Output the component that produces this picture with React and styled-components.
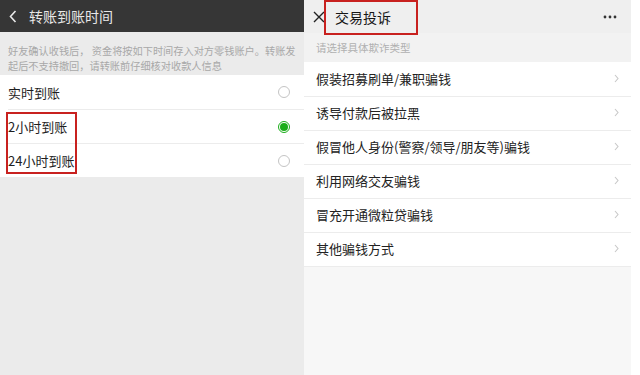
import React from "react";
import styled, { createGlobalStyle } from "styled-components";

const Global = createGlobalStyle`
  html, body { margin: 0; padding: 0; background: #fff; }
  body { font-family: "Noto Sans CJK SC", "Noto Sans", sans-serif; }
  * { box-sizing: border-box; }
`;

const Page = styled.div`
  width: 640px;
  height: 375px;
  display: flex;
  overflow: hidden;
  background: #fff;
`;

const LeftPane = styled.div`
  position: relative;
  width: 304px;
  height: 100%;
  background: #ebebeb;
  display: flex;
  flex-direction: column;
`;

const DarkBar = styled.div`
  height: 32px;
  background: #363636;
  display: flex;
  align-items: center;
  padding-left: 9px;
  gap: 12px;
  color: #e8e8e8;
  font-size: 14px;
`;

const Note = styled.div`
  height: 43px;
  padding: 11px 4px 0 8px;
  font-size: 10.2px;
  line-height: 15px;
  color: #a8a8a8;
`;

const RadioList = styled.div`
  background: #fff;
  padding-left: 8px;
`;

const RadioRow = styled.div`
  height: 34px;
  display: flex;
  align-items: center;
  justify-content: space-between;
  padding-right: 14px;
  font-size: 13px;
  color: #1e1e1e;
  border-top: ${(p) => (p.$first ? "none" : "1px solid #ececec")};
`;

const Radio = styled.span`
  width: 12px;
  height: 12px;
  border-radius: 50%;
  border: 1px solid ${(p) => (p.$on ? "#1aad19" : "#c4c4c4")};
  display: flex;
  align-items: center;
  justify-content: center;
  &::after {
    content: "";
    width: 8px;
    height: 8px;
    border-radius: 50%;
    background: ${(p) => (p.$on ? "#1aad19" : "transparent")};
  }
`;

const RightPane = styled.div`
  position: relative;
  width: 327px;
  height: 100%;
  background: #f7f7f7;
  display: flex;
  flex-direction: column;
`;

const LightBar = styled.div`
  height: 33px;
  background: #efefef;
  display: flex;
  align-items: center;
  padding: 0 14px 0 9px;
  gap: 10px;
  font-size: 14px;
  color: #161616;
`;

const BarTitle = styled.span`
  flex: 1;
`;

const Hint = styled.div`
  height: 29px;
  background: #f2f2f2;
  display: flex;
  align-items: center;
  padding-left: 12px;
  font-size: 10.5px;
  color: #b0b0b0;
`;

const MenuList = styled.div`
  background: #fff;
  border-bottom: 1px solid #ececec;
`;

const MenuRow = styled.div`
  height: 34px;
  display: flex;
  align-items: center;
  justify-content: space-between;
  padding: 0 12px 2px 12px;
  font-size: 13px;
  color: #222;
  border-top: ${(p) => (p.$first ? "none" : "1px solid #ececec")};
`;

const Frame = styled.div`
  position: absolute;
  border: 2px solid #c8211f;
  left: ${(p) => p.$x}px;
  top: ${(p) => p.$y}px;
  width: ${(p) => p.$w}px;
  height: ${(p) => p.$h}px;
`;

const Back = () => (
  <svg width="8" height="13" viewBox="0 0 8 13">
    <path d="M6.5 1 L1.5 6.5 L6.5 12" fill="none" stroke="#e8e8e8" strokeWidth="1.6" />
  </svg>
);

const Close = () => (
  <svg width="12" height="12" viewBox="0 0 12 12">
    <path d="M1 1 L11 11 M11 1 L1 11" stroke="#222" strokeWidth="1.4" />
  </svg>
);

const Dots = () => (
  <svg width="14" height="4" viewBox="0 0 14 4">
    <circle cx="2" cy="2" r="1.4" fill="#333" />
    <circle cx="7" cy="2" r="1.4" fill="#333" />
    <circle cx="12" cy="2" r="1.4" fill="#333" />
  </svg>
);

const Chevron = () => (
  <svg width="5" height="9" viewBox="0 0 5 9">
    <path d="M1 1 L4 4.5 L1 8" fill="none" stroke="#c8c8c8" strokeWidth="1.1" />
  </svg>
);

const options = [
  { label: "实时到账", on: false },
  { label: "2小时到账", on: true },
  { label: "24小时到账", on: false },
];

const types = [
  "假装招募刷单/兼职骗钱",
  "诱导付款后被拉黑",
  "假冒他人身份(警察/领导/朋友等)骗钱",
  "利用网络交友骗钱",
  "冒充开通微粒贷骗钱",
  "其他骗钱方式",
];

export default function App() {
  return (
    <Page>
      <Global />
      <LeftPane>
        <DarkBar>
          <Back />
          <span>转账到账时间</span>
        </DarkBar>
        <Note>
          好友确认收钱后，&nbsp;资金将按如下时间存入对方零钱账户。转账发起后不支持撤回，请转账前仔细核对收款人信息
        </Note>
        <RadioList>
          {options.map((o, i) => (
            <RadioRow key={o.label} $first={i === 0}>
              <span>{o.label}</span>
              <Radio $on={o.on} />
            </RadioRow>
          ))}
        </RadioList>
        <Frame $x={6} $y={112} $w={71} $h={62} />
      </LeftPane>
      <RightPane>
        <LightBar>
          <Close />
          <BarTitle>交易投诉</BarTitle>
          <Dots />
        </LightBar>
        <Hint>请选择具体欺诈类型</Hint>
        <MenuList>
          {types.map((t, i) => (
            <MenuRow key={t} $first={i === 0}>
              <span>{t}</span>
              <Chevron />
            </MenuRow>
          ))}
        </MenuList>
        <Frame $x={20} $y={0} $w={94} $h={35} />
      </RightPane>
    </Page>
  );
}
